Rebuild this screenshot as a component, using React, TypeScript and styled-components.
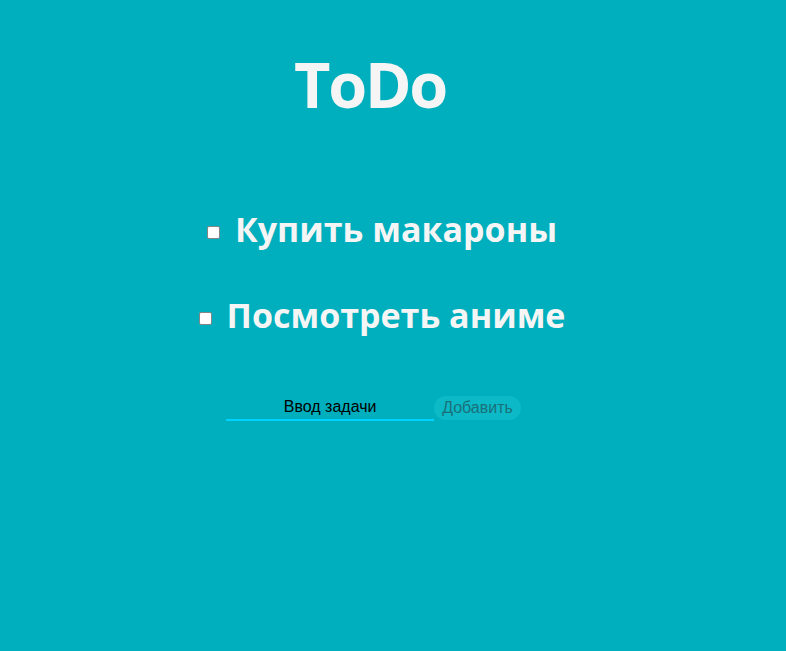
import React from "react";
import styled, { createGlobalStyle } from "styled-components";

const Global = createGlobalStyle`
  html, body { margin: 0; padding: 0; background: #00afbd; }
  body { font-family: "Open Sans", "Noto Sans", sans-serif; min-height: 651px; }
`;

const Page = styled.main`
  width: 740px;
  display: flex;
  flex-direction: column;
  align-items: center;
  padding-top: 39px;
`;

const Title = styled.h1`
  margin: 0;
  font-size: 63px;
  line-height: 90px;
  font-weight: 700;
  color: #f5f5f5;
  letter-spacing: -2.3px;
`;

const List = styled.ul`
  list-style: none;
  margin: 78px 0 0;
  padding: 0 0 0 24px;
  display: flex;
  flex-direction: column;
  align-items: center;
  gap: 42px;
`;

const Item = styled.li`
  display: flex;
  align-items: center;
  gap: 15px;
  font-size: 34px;
  line-height: 44px;
  font-weight: 700;
  color: #f5f5f5;
`;

const Check = styled.input`
  appearance: none;
  box-sizing: border-box;
  width: 13px;
  height: 13px;
  margin: 7px 0 0;
  background: #fff;
  border: 1px solid #858585;
  border-radius: 2px;
`;

const Form = styled.form`
  display: flex;
  align-items: flex-start;
  margin-top: 58px;
  padding-left: 7px;
`;

const TaskInput = styled.input`
  width: 208px;
  height: 26px;
  box-sizing: border-box;
  border: none;
  border-bottom: 2px solid #00d3ff;
  background: transparent;
  text-align: center;
  font-family: "Liberation Sans", Arial, sans-serif;
  font-size: 16px;
  color: #000;
  padding: 0;
  outline: none;
  &::placeholder { color: #000; }
`;

const AddButton = styled.button`
  height: 24px;
  margin-top: 1px;
  padding: 0 8px;
  border: none;
  border-radius: 12px;
  background: #0bbac6;
  color: #1b6f79;
  font-family: "Liberation Sans", Arial, sans-serif;
  font-size: 16px;
  cursor: pointer;
`;

const tasks = ["Купить макароны", "Посмотреть аниме"];

export default function App() {
  return (
    <>
      <Global />
      <Page>
        <Title>ToDo</Title>
        <List>
          {tasks.map((t) => (
            <Item key={t}>
              <Check type="checkbox" />
              <span>{t}</span>
            </Item>
          ))}
        </List>
        <Form onSubmit={(e) => e.preventDefault()}>
          <TaskInput placeholder="Ввод задачи" />
          <AddButton type="submit">Добавить</AddButton>
        </Form>
      </Page>
    </>
  );
}
